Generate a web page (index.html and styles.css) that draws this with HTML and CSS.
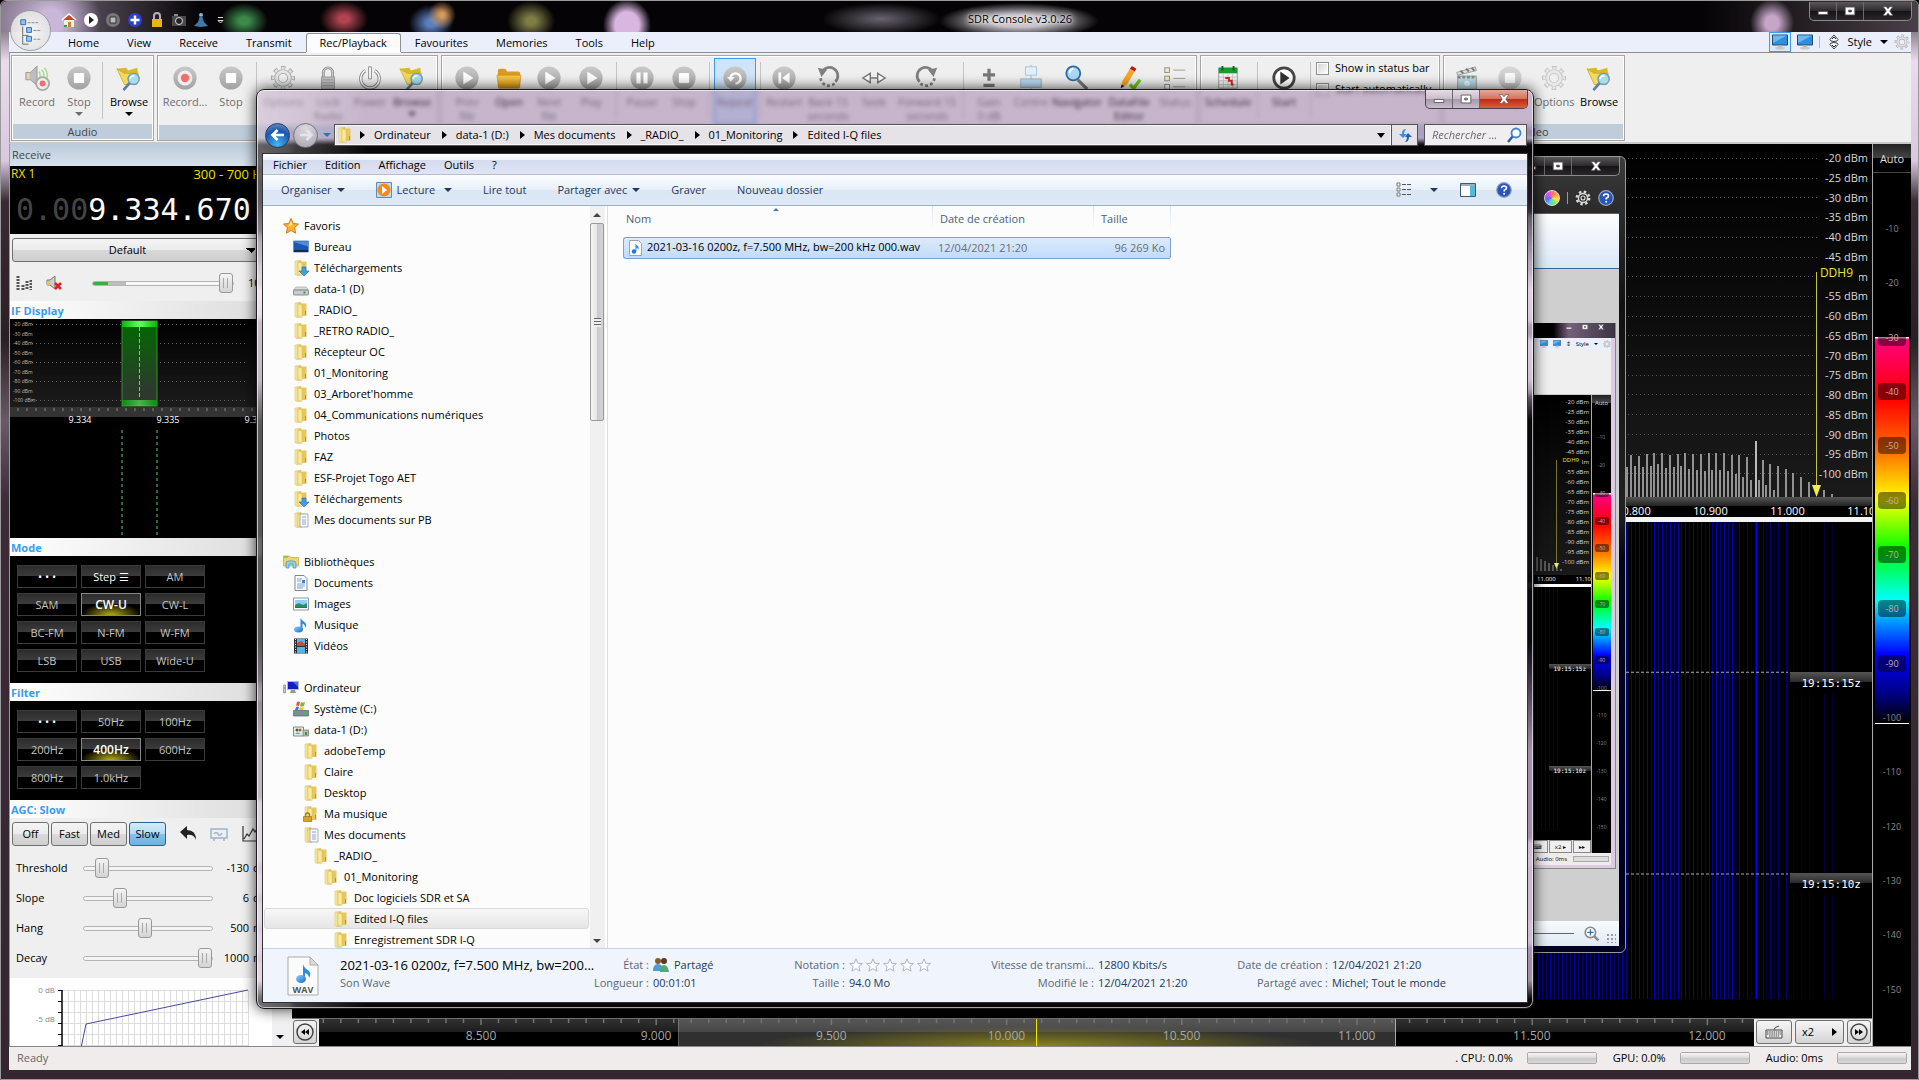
FILE: index.html
```
<!DOCTYPE html>
<html lang="fr">
<head>
  <meta charset="UTF-8" />
  <meta name="viewport" content="width=device-width, initial-scale=1.0"/>
  <title>SDR Console v3.0.26</title>
  <link rel="stylesheet" href="styles.css">
</head>
<body>

  <!-- icon sprite -->
  <svg class="sprite" aria-hidden="true">
    <defs>
      <linearGradient id="gDisc" x1="0" y1="0" x2="0" y2="1"><stop offset="0" stop-color="#c9c9c9"/><stop offset="1" stop-color="#a2a2a2"/></linearGradient>
      <linearGradient id="gFold" x1="0" y1="0" x2="1" y2="0"><stop offset="0" stop-color="#fbf0a8"/><stop offset="1" stop-color="#dcb84e"/></linearGradient>
      <linearGradient id="gOrange" x1="0" y1="0" x2="0" y2="1"><stop offset="0" stop-color="#f6cd4f"/><stop offset="1" stop-color="#d9920c"/></linearGradient>
      <linearGradient id="gBlue" x1="0" y1="0" x2="1" y2="1"><stop offset="0" stop-color="#8fd0fb"/><stop offset="1" stop-color="#1668c8"/></linearGradient>
    </defs>
    <symbol id="play" viewBox="0 0 28 28"><circle cx="14" cy="14" r="12.5" fill="url(#gDisc)"/><path d="M10 7l11 7-11 7z" fill="#fff"/></symbol>
    <symbol id="stop" viewBox="0 0 28 28"><circle cx="14" cy="14" r="12.5" fill="url(#gDisc)"/><rect x="8.500" y="8.500" width="11" height="11" rx="1" fill="#fff"/></symbol>
    <symbol id="pause" viewBox="0 0 28 28"><circle cx="14" cy="14" r="12.5" fill="url(#gDisc)"/><path d="M8 8h4.500v12H8zM15.500 8H20v12h-4.500z" fill="#fff"/></symbol>
    <symbol id="restart" viewBox="0 0 28 28"><circle cx="14" cy="14" r="12.5" fill="url(#gDisc)"/><path d="M8 8h3v12H8zM20 8v12l-8-6z" fill="#fff"/></symbol>
    <symbol id="repeat" viewBox="0 0 28 28"><circle cx="14" cy="14" r="12.5" fill="url(#gDisc)"/><path d="M9 15a5.500 5.500 0 1 1 5.500 5" fill="none" stroke="#fff" stroke-width="2.600"/><path d="M5.500 13h8l-4 5z" fill="#fff"/></symbol>
    <symbol id="rec" viewBox="0 0 28 28"><circle cx="14" cy="14" r="12.5" fill="url(#gDisc)"/><circle cx="14" cy="14" r="8" fill="#eee"/><circle cx="14" cy="14" r="4.500" fill="#f36d6d"/></symbol>
    <symbol id="speaker-rec" viewBox="0 0 28 28"><path d="M2 8h5l7-7v21l-7-6H2z" fill="#bdbdbd" stroke="#999"/><path d="M3 9h3v6H3z" fill="#e8d9a0"/><path d="M16 7q3 4 0 9M19 5q5 6 0 12M22 3q6 8 1 14" fill="none" stroke="#9fe08c" stroke-width="1.500"/><circle cx="20" cy="20" r="7" fill="#ededed" stroke="#aaa" stroke-width="2"/><circle cx="20" cy="20" r="3.200" fill="#f36d6d"/></symbol>
    <symbol id="browse" viewBox="0 0 28 28"><path d="M1 4l10-1 2 3 10-3 1 9-1 9H9z" fill="#d9b92c"/><path d="M1 4l8 5h15l-2 12H9z" fill="#f1da5e" stroke="#c09b18" stroke-width=".6"/><path d="M15 19l-7 8" stroke="#5d7ea8" stroke-width="3"/><circle cx="19" cy="15" r="6" fill="#a9dcec" stroke="#6f9db2" stroke-width="1.500"/><path d="M15 15q1-4 5-3" fill="none" stroke="#fff" stroke-width="1.500"/></symbol>
    <symbol id="gear" viewBox="0 0 28 28"><circle cx="14" cy="14" r="11" fill="none" stroke="#aaa" stroke-width="4" stroke-dasharray="4.600 4.040" stroke-dashoffset="2.300"/><circle cx="14" cy="14" r="7" fill="none" stroke="#aaa" stroke-width="5"/><circle cx="14" cy="14" r="7" fill="none" stroke="#e4e4e4" stroke-width="3"/><circle cx="14" cy="14" r="10.500" fill="none" stroke="#e4e4e4" stroke-width="2.500" stroke-dasharray="3 5.250" stroke-dashoffset="1.500"/></symbol>
    <symbol id="lock" viewBox="0 0 28 28"><path d="M9 14V8a5 5 0 0 1 10 0v6" fill="none" stroke="#8f8f8f" stroke-width="3"/><path d="M9 14V8a5 5 0 0 1 10 0v6" fill="none" stroke="#ddd" stroke-width="1"/><rect x="7" y="13" width="14" height="13" fill="#c4c4c4" stroke="#9a9a9a"/><path d="M8 16h12M8 19h12M8 22h12" stroke="#999"/></symbol>
    <symbol id="power" viewBox="0 0 28 28"><path d="M9 6a10 10 0 1 0 10 0" fill="none" stroke="#888" stroke-width="3.500"/><path d="M9 6a10 10 0 1 0 10 0M14 3v12" fill="none" stroke="#fff" stroke-width="1.500"/><path d="M12.500 2h3v13h-3z" fill="#fff" stroke="#888"/></symbol>
    <symbol id="open" viewBox="0 0 28 28"><path d="M2 6q0-2 2-2h6l2 3h12q2 0 2 2v15H2z" fill="#d99c22"/><path d="M3 25L1 11h26l-2 14z" fill="url(#gOrange)" stroke="#c8860e" stroke-width=".6"/></symbol>
    <symbol id="ccw" viewBox="0 0 28 28"><path d="M7 9a9 9 0 1 1 15 9" fill="none" stroke="#808080" stroke-width="3"/><path d="M21 20a9 9 0 0 1-15-6" fill="none" stroke="#808080" stroke-width="3" stroke-dasharray="3 2.500"/><path d="M3 3l10 2-6 8z" fill="#808080"/></symbol>
    <symbol id="cw" viewBox="0 0 28 28"><path d="M21 9a9 9 0 1 0-15 9" fill="none" stroke="#808080" stroke-width="3"/><path d="M7 20a9 9 0 0 0 15-6" fill="none" stroke="#808080" stroke-width="3" stroke-dasharray="3 2.500"/><path d="M25 3L15 5l6 8z" fill="#808080"/></symbol>
    <symbol id="seek" viewBox="0 0 28 28"><path d="M2 14l8-5v10zM26 14l-8-5v10zM10 14h8" fill="#fff" stroke="#777" stroke-width="1.500"/></symbol>
    <symbol id="gain" viewBox="0 0 28 28"><path d="M14 4v13M7.500 10.500h13M8 22h12" stroke="#777" stroke-width="3.500"/></symbol>
    <symbol id="centre" viewBox="0 0 28 28"><path d="M14 0v28" stroke="#9bb4c8"/><rect x="8" y="2" width="12" height="9" fill="#e3f0f9" stroke="#a6c3da"/><rect x="3" y="15" width="22" height="9" fill="#bcdcf2" stroke="#8fb4d2"/></symbol>
    <symbol id="lens" viewBox="0 0 28 28"><path d="M15 16l10 10" stroke="#777" stroke-width="3.500"/><circle cx="10" cy="9" r="7.500" fill="#a9d9f7" stroke="#3568a0" stroke-width="2"/><path d="M6 9q0-4 4-5" fill="none" stroke="#fff" stroke-width="2"/></symbol>
    <symbol id="pencil" viewBox="0 0 28 28"><path d="M5 25l2-8 8-13 5 3-8 14z" fill="#f5a623"/><path d="M15 4l2-3 5 3-2 3z" fill="#c5161c"/><path d="M5 25l1-4 3 2z" fill="#222"/><path d="M15 21l4 4 7-9" fill="none" stroke="#6cc71c" stroke-width="3.500"/></symbol>
    <symbol id="list" viewBox="0 0 28 28"><g fill="#f6eab0" stroke="#8a8a8a"><rect x="3" y="3" width="5" height="5"/><rect x="3" y="12" width="5" height="5"/><rect x="3" y="21" width="5" height="5" fill="#fff"/></g><path d="M12 5.500h13M12 14.500h13M12 23.500h13" stroke="#999"/></symbol>
    <symbol id="calendar" viewBox="0 0 28 28"><path d="M4 3h20v22H4z" fill="#f4f4f4" stroke="#999"/><path d="M4 3h20v6H4z" fill="#1d9a2f"/><path d="M8 1v5M20 1v5" stroke="#0d5f19" stroke-width="2"/><path d="M4 13h20M4 17h20M4 21h20M9 9v16M14 9v16M19 9v16" stroke="#c8c8c8"/><path d="M11 14h4v3h3v4h2" fill="none" stroke="#dd2222" stroke-width="2"/></symbol>
    <symbol id="start" viewBox="0 0 28 28"><circle cx="14" cy="14" r="11" fill="#fff" stroke="#454545" stroke-width="3"/><path d="M10 7l10 7-10 7z" fill="#333"/></symbol>
    <symbol id="clapper" viewBox="0 0 28 28"><path d="M3 8l20-6 1 4-20 5z" fill="#ddd" stroke="#999"/><path d="M7 6l3 3M13 4l3 3M19 3l3 3" stroke="#777" stroke-width="2"/><rect x="4" y="12" width="20" height="14" fill="#b8dbe6" stroke="#999"/><path d="M4 13h20" stroke="#888" stroke-width="3" stroke-dasharray="3 2"/><circle cx="14" cy="20" r="3" fill="#e8f6fb"/></symbol>

    <symbol id="folder" viewBox="0 0 16 16"><path d="M2 1l6-.5V15l-4 .5-2-1z" fill="url(#gFold)" stroke="#d6b95a" stroke-width=".5"/><path d="M7 1.500h6.500V14H7z" fill="#e6c65e"/><path d="M5 2l4 1v12.500l-4-1.500z" fill="#f8eb9f" stroke="#d6b95a" stroke-width=".5"/><path d="M12.500 9v4" stroke="#4aa8e0"/></symbol>
    <symbol id="folder-dl" viewBox="0 0 16 16"><use href="#folder"/><path d="M9 7h4v4h3l-5 5-5-5h3z" fill="#3d9fe6" stroke="#1c68b0" stroke-width=".6"/></symbol>
    <symbol id="folder-doc" viewBox="0 0 16 16"><use href="#folder"/><path d="M7 2h8v13H7z" fill="#f6f8fb" stroke="#8793a5" stroke-width=".7"/><path d="M9 5h4M9 8h4M9 10h4M9 12h4" stroke="#7b93b8" stroke-width=".8"/></symbol>
    <symbol id="folder-lock" viewBox="0 0 16 16"><use href="#folder"/><path d="M2.500 11V9a2 2 0 0 1 4 0v2" fill="none" stroke="#a17a10" stroke-width="1.300"/><path d="M.5 10.500h8V15.500h-8z" fill="#d9a520" stroke="#8f6a08" stroke-width=".6"/></symbol>
    <symbol id="star" viewBox="0 0 16 16"><path d="M8 .5l2.200 5 5.300.6-4 3.600 1.200 5.500L8 12.500l-4.700 2.700 1.200-5.500-4-3.600 5.300-.6z" fill="#fbb32d" stroke="#dd7714"/><path d="M8 3l1.300 3.500L5 9z" fill="#fff0a0"/></symbol>
    <symbol id="rate" viewBox="0 0 16 16"><path d="M8 1l2 5 5.300.3-4 3.500 1.300 5.200L8 12.200 3.400 15l1.300-5.200-4-3.500L6 6z" fill="#fff" stroke="#a3acb8"/></symbol>
    <symbol id="desktop" viewBox="0 0 16 16"><path d="M.5 2h15v11H.5z" fill="#1d56b0" stroke="#6f92c0"/><path d="M1 3l14-.5v5z" fill="#4b8de0"/><path d="M1 11h14v2H1z" fill="#1b2a4a"/></symbol>
    <symbol id="drive" viewBox="0 0 16 16"><path d="M3 6h10l2.500 3H.5z" fill="#ddd" stroke="#999" stroke-width=".6"/><rect x=".5" y="9" width="15" height="5" rx="1" fill="#c9cccf" stroke="#777" stroke-width=".8"/><path d="M11.500 10.500v2" stroke="#2ea52e" stroke-width="2"/></symbol>
    <symbol id="library" viewBox="0 0 16 16"><path d="M.5 2h6l1 1.500h8V12H.5z" fill="#f0d572" stroke="#c6a63d" stroke-width=".7"/><path d="M1 3h4" stroke="#56b52e"/><path d="M3 14V9.500Q3 7 6 7h4q3 0 3 2.500V14h-3v-4H6v4z" fill="#8dd3f5" stroke="#3c8fc4" stroke-width=".7"/></symbol>
    <symbol id="doc" viewBox="0 0 16 16"><path d="M2 .5h9l3 3v12H2z" fill="#fff" stroke="#7b8796"/><path d="M4 4h5M4 6h4M4 9h8M4 11h8M4 13h6" stroke="#7a99cf"/><path d="M9 5h3v3H9z" fill="#3a86d0"/></symbol>
    <symbol id="image" viewBox="0 0 16 16"><path d="M.5 2h15v12H.5z" fill="#fff" stroke="#8a97a5"/><path d="M2 4h12v8H2z" fill="#8fd0f8"/><path d="M2 9q4-3 6-1t6-1v5H2z" fill="#2d8a6a"/><path d="M2 11h12v1H2z" fill="#1b64c0"/></symbol>
    <symbol id="note" viewBox="0 0 16 16"><path d="M7.500 12V1q1 2.500 4 4 3 2.500.5 6 .5-3.500-2.500-4.500V12" fill="#2a8be0"/><ellipse cx="5.500" cy="12.500" rx="4.500" ry="3" fill="url(#gBlue)"/></symbol>
    <symbol id="film" viewBox="0 0 16 16"><path d="M1 .5h14v15H1z" fill="#2a3138"/><path d="M4 1h8v6H4zM4 9h8v6H4z" fill="#58b4e8"/><path d="M4 5l4-2 4 3v2H4z" fill="#c0502f"/><path d="M2.500 1v15M13.500 1v15" stroke="#fff" stroke-dasharray="1 1.500"/></symbol>
    <symbol id="computer" viewBox="0 0 16 16"><path d="M4 1h12v9H4z" fill="#b6bcc4"/><path d="M5 2h10v7H5z" fill="#1420b8"/><path d="M10 2h5v5z" fill="#3f6be8"/><path d="M8 10h4l1 3H7z" fill="#999"/><path d="M.5 5h2v8h-2z" fill="#ccc" stroke="#777" stroke-width=".6"/><path d="M1 8h1" stroke="#2b2"/></symbol>
    <symbol id="system" viewBox="0 0 16 16"><path d="M4 1q2-1 3 0L6 5q-2-1-3 0z" fill="#e5532d"/><path d="M8 1q2 1 4 0l-1 4q-2 1-4 0z" fill="#7cb82f"/><path d="M3 6q2-1 3 0L5 9H2z" fill="#3a7fd0"/><path d="M7 6q2 1 4 0l-1 3H6z" fill="#f8c21c"/><path d="M.5 9.500h15V15H.5z" fill="#7a8f9a" stroke="#56646c" stroke-width=".7"/><path d="M12.500 11v3" stroke="#3c3" stroke-width="2"/></symbol>
    <symbol id="shared" viewBox="0 0 16 16"><path d="M.5 5h10v9H.5z" fill="#e4eee8" stroke="#888"/><circle cx="4" cy="8" r="1.500" fill="#7a4a2a"/><circle cx="7" cy="8" r="1.500" fill="#9a6a3a"/><path d="M2 12q2-3 6 0z" fill="#5aa"/><path d="M10 8h5.500v6H10z" fill="#bbb" stroke="#777" stroke-width=".7"/><path d="M13 10v3" stroke="#2a2" stroke-width="2"/></symbol>
    <symbol id="wave" viewBox="0 0 16 16"><path d="M1.500.5h9l3 3v12h-12z" fill="#fff" stroke="#9aa5b2"/><path d="M7.500 11V3.500q1 2 2.500 2.500 1.500 2 0 4 0-2-1.500-2.500V11" fill="#2a8be0"/><circle cx="6" cy="11.500" r="2.200" fill="#1c7ad8"/></symbol>
    <symbol id="monitor" viewBox="0 0 16 16"><path d="M.5 1h15v10H.5z" fill="#2f8fdf" stroke="#27486a"/><path d="M1 1.500h14L1 9z" fill="#69b8f2"/><path d="M6 11h4v2H6z" fill="#aaa"/><ellipse cx="8" cy="14" rx="5" ry="1.500" fill="#c9c9c9"/></symbol>
    <symbol id="help" viewBox="0 0 16 16"><circle cx="8" cy="8" r="7.300" fill="#2a55b8" stroke="#97a6bd" stroke-width="1.200"/><path d="M5.500 6.300Q5.500 4 8 4t2.500 2Q10.500 7.300 8.200 8.300V9.500" fill="none" stroke="#fff" stroke-width="1.600"/><circle cx="8.200" cy="11.800" r="1" fill="#fff"/></symbol>
    <symbol id="min" viewBox="0 0 16 16"><path d="M2.500 8.500h11v3.500h-11z" fill="#fff" stroke="#555"/></symbol>
    <symbol id="max" viewBox="0 0 16 16"><path d="M2.500 3.500h11v9h-11zM6.500 7h3v2h-3z" fill="#fff" fill-rule="evenodd" stroke="#555"/></symbol>
    <symbol id="close" viewBox="0 0 16 16"><path d="M2.500 3h3.500l2 2.500L10 3h3.500L10 8l3.500 5H10L8 10.500 6 13H2.500L6 8z" fill="#fff" stroke="#555" stroke-width=".8"/></symbol>
  </svg>

  <div class="console">
    <header class="titlebar">
      <div class="quick">
        <svg viewBox="0 0 16 16"><path d="M1 8l7-6 7 6z" fill="#c7482a"/><path d="M1 8l7-6 7 6" fill="none" stroke="#fff" stroke-width="1.500"/><path d="M3 8h10v7H3z" fill="#f1efe2"/><path d="M7 10h3v5H7z" fill="#c98435"/><path d="M3 14h3" stroke="#2fa52f" stroke-width="2"/></svg>
        <svg viewBox="0 0 16 16"><circle cx="8" cy="8" r="7" fill="#fff"/><path d="M6 4l5 4-5 4z" fill="#222"/></svg>
        <svg viewBox="0 0 16 16"><circle cx="8" cy="8" r="7" fill="#777"/><path d="M5 5h6v6H5z" fill="#bbb" stroke="#333"/></svg>
        <svg viewBox="0 0 16 16"><circle cx="8" cy="8" r="7" fill="#2b3fd0"/><path d="M8 3.500v9M3.500 8h9" stroke="#fff" stroke-width="2.500"/></svg>
        <svg viewBox="0 0 16 16"><path d="M5 7V4q0-3 3-3t3 3v3" fill="none" stroke="#b4b4b4" stroke-width="2"/><path d="M3 7h10v8H3z" fill="#e8b617"/></svg>
        <svg viewBox="0 0 16 16"><path d="M1 4h14v10H1z" fill="#4a4a4a"/><path d="M3 2h4v2H3z" fill="#888"/><circle cx="8" cy="9" r="3.500" fill="#222" stroke="#ddd"/></svg>
        <svg viewBox="0 0 16 16"><circle cx="8" cy="3" r="2" fill="#8ab6dc"/><path d="M7 4h2l2 6 4 4-7 1-7-1 4-4z" fill="#3f78ad"/></svg>
        <svg viewBox="0 0 16 16"><path d="M3 5.500h5M3 8.500h5L5.500 11z" fill="none" stroke="#ddd"/></svg>
      </div>
      <h1>SDR Console v3.0.26</h1>
      <div class="caption dark">
        <button aria-label="Minimize"><svg><use href="#min"/></svg></button>
        <button aria-label="Restore"><svg><use href="#max"/></svg></button>
        <button class="wide" aria-label="Close"><svg><use href="#close"/></svg></button>
      </div>
    </header>

    <button class="orb" aria-label="Menu"><svg viewBox="0 0 40 40"><path d="M12 16v18M12 25h6M12 34h6" fill="none" stroke="#666"/><path d="M17 12h12M23 20h8M23 29h8" stroke="#888" stroke-dasharray="3 1"/><g fill="#8fc6f0" stroke="#2d6fa8"><path d="M10 9h5v5h-5zM16 17h5v5h-5zM16 26h5v5h-5z"/></g></svg></button>

    <nav class="tabs">
      <a href="#">Home</a><a href="#">View</a><a href="#">Receive</a><a href="#">Transmit</a><a href="#" class="active">Rec/Playback</a><a href="#">Favourites</a><a href="#">Memories</a><a href="#">Tools</a><a href="#">Help</a>
      <div class="tab-tools">
        <button class="picked" aria-label="Screen 1"><svg><use href="#monitor"/></svg></button>
        <button aria-label="Screen 2"><svg><use href="#monitor"/></svg></button>
        <i class="bar"></i>
        <svg viewBox="0 0 16 16"><path d="M8 1l4 4.500q0 2-4 2t-4-2zM8 15l4-4.500q0-2-4-2t-4 2z" fill="#f7f7f7" stroke="#444"/><path d="M6 5l2-2 2 2M6 11l2 2 2-2" fill="none" stroke="#222"/></svg>
        <button class="style-btn">Style <i class="down"></i></button>
        <svg><use href="#gear"/></svg>
      </div>
    </nav>

    <section class="ribbon">
      <div class="group">
        <div class="tools">
          <button class="w46 off"><svg><use href="#speaker-rec"/></svg>Record</button>
          <button class="w38 off"><svg><use href="#stop"/></svg>Stop<i class="down"></i></button>
          <i class="sep"></i>
          <button class="w44"><svg><use href="#browse"/></svg>Browse<i class="down"></i></button>
        </div>
        <div class="group-name">Audio</div>
      </div>
      <div class="group">
        <div class="tools">
          <button class="w50 off"><svg><use href="#rec"/></svg>Record...</button>
          <button class="w42 off"><svg><use href="#stop"/></svg>Stop</button>
          <i class="sep"></i>
          <button class="w44 off"><svg><use href="#gear"/></svg>Options</button>
          <button class="w46 off"><svg><use href="#lock"/></svg>Lock<br>Radio</button>
          <button class="w38 off"><svg><use href="#power"/></svg>Power</button>
          <button class="w46"><svg><use href="#browse"/></svg>Browse<i class="down"></i></button>
        </div>
        <div class="group-name">Data</div>
      </div>
      <div class="group">
        <div class="tools">
          <button class="w46 off"><svg><use href="#play"/></svg>Prev<br>file</button>
          <button class="w38"><svg><use href="#open"/></svg>Open</button>
          <button class="w42 off"><svg><use href="#play"/></svg>Next<br>file</button>
          <button class="w42 off"><svg><use href="#play"/></svg>Play</button>
          <i class="sep"></i>
          <button class="w42 off"><svg><use href="#pause"/></svg>Pause</button>
          <button class="w42 off"><svg><use href="#stop"/></svg>Stop</button>
          <i class="sep"></i>
          <button class="w42 off on"><svg><use href="#repeat"/></svg>Repeat</button>
          <i class="sep"></i>
          <button class="w38 off"><svg><use href="#restart"/></svg>Restart</button>
          <button class="w50 off"><svg><use href="#ccw"/></svg>Back 15<br>seconds</button>
          <button class="w42 off"><svg><use href="#seek"/></svg>Seek</button>
          <button class="w64 off"><svg><use href="#cw"/></svg>Forward 15<br>seconds</button>
          <i class="sep"></i>
          <button class="w42 off"><svg><use href="#gain"/></svg>Gain<br>0 dB</button>
          <button class="w42 off"><svg><use href="#centre"/></svg>Centre</button>
          <button class="w50"><svg><use href="#lens"/></svg>Navigator</button>
          <button class="w54"><svg><use href="#pencil"/></svg>DataFile<br>Editor</button>
          <button class="w38 off"><svg><use href="#list"/></svg>Status</button>
        </div>
        <div class="group-name">Playback</div>
      </div>
      <div class="group">
        <div class="tools">
          <button class="w50"><svg><use href="#calendar"/></svg>Schedule</button>
          <i class="sep"></i>
          <button class="w44"><svg><use href="#start"/></svg>Start</button>
          <i class="sep"></i>
          <div class="checks">
            <label><input type="checkbox"> Show in status bar</label>
            <label><input type="checkbox"> Start automatically</label>
          </div>
        </div>
        <div class="group-name">Scheduler</div>
      </div>
      <div class="group">
        <div class="tools">
          <button class="w42 off"><svg><use href="#clapper"/></svg>Record</button>
          <button class="w44 off"><svg class="faint"><use href="#stop"/></svg>Stop</button>
          <button class="w44 off"><svg class="faint"><use href="#gear"/></svg>Options</button>
          <button class="w46"><svg><use href="#browse"/></svg>Browse</button>
        </div>
        <div class="group-name">Video</div>
      </div>
    </section>

    <main class="workspace">
      <aside class="receive">
        <h2>Receive</h2>
        <div class="rx">
          <div class="rx-head"><span>RX 1</span><span>300 - 700 Hz</span></div>
          <div class="freq"><span>0.00</span>9.334.670</div>
        </div>
        <div class="rx-tools">
          <select aria-label="Device"><option>Default</option></select>
          <div class="volume">
            <svg viewBox="0 0 16 16"><path d="M2 1v14M7 10v5M11 6v9M15 5v10" stroke="#555" stroke-width="3" stroke-dasharray="2 1"/></svg>
            <svg viewBox="0 0 16 16"><path d="M1 5h3l5-4v13l-5-4H1z" fill="#ccc" stroke="#777"/><path d="M1 6h3v4H1z" fill="#e9c62a"/><path d="M9 8l6 6M15 8l-6 6" stroke="#d22" stroke-width="2.500"/></svg>
            <input type="range" class="vol" value="100" aria-label="Volume">
            <span>100%</span>
          </div>
        </div>
        <h3>IF Display</h3>
        <svg class="if-display" id="ifDisplay" viewBox="0 0 262 219"></svg>
        <h3>Mode</h3>
        <div class="keys">
          <button class="lit">• • •</button><button class="lit">Step ☰</button><button>AM</button>
          <button>SAM</button><button class="active">CW-U</button><button>CW-L</button>
          <button>BC-FM</button><button>N-FM</button><button>W-FM</button>
          <button>LSB</button><button>USB</button><button>Wide-U</button>
        </div>
        <h3>Filter</h3>
        <div class="keys">
          <button class="lit">• • •</button><button>50Hz</button><button>100Hz</button>
          <button>200Hz</button><button class="active">400Hz</button><button>600Hz</button>
          <button>800Hz</button><button>1.0kHz</button>
        </div>
        <h3>AGC: Slow</h3>
        <div class="agc">
          <div class="agc-modes">
            <button>Off</button><button>Fast</button><button>Med</button><button class="active">Slow</button>
            <svg viewBox="0 0 18 18"><path d="M1 7l7-6v4q9 0 9 10-2-6-9-5v4z" fill="#222"/></svg>
            <svg viewBox="0 0 18 18"><path d="M1 4h16v9H1zM4 9q2-3 4 0t4-1M4 13v3M14 13v3" fill="none" stroke="#9db4cc" stroke-width="1.500"/></svg>
            <svg viewBox="0 0 18 18"><path d="M2 1v15h15M3 14l3-5 2 2 4-7 2 3 4-6" fill="none" stroke="#333" stroke-width="1.200"/></svg>
          </div>
          <div class="agc-row"><label for="thr">Threshold</label><input type="range" id="thr" value="10"><b>-130</b> dBm</div>
          <div class="agc-row"><label for="slope">Slope</label><input type="range" id="slope" value="25"><b>6</b> dB</div>
          <div class="agc-row"><label for="hang">Hang</label><input type="range" id="hang" value="47"><b>500</b> ms</div>
          <div class="agc-row"><label for="decay">Decay</label><input type="range" id="decay" value="100"><b>1000</b> ms</div>
        </div>
        <svg class="agc-chart" id="agcChart" viewBox="0 0 262 70"></svg>
      </aside>
      <div class="splitter"><i class="down"></i></div>

      <section class="spectrum">
        <div class="plot">
          <svg id="plot" viewBox="0 0 340 353"></svg>
          <div class="dbm" id="dbm"></div>
          <span class="ddh">DDH9</span>
        </div>
        <div class="ruler"><span>10.800</span><span>10.900</span><span>11.000</span><span>11.100</span></div>
        <div class="waterfall">
          <svg id="fall" viewBox="0 0 340 475" preserveAspectRatio="none"></svg>
          <time class="t1">19:15:15z</time>
          <time class="t2">19:15:10z</time>
        </div>
        <div class="band-row">
          <button class="round" aria-label="Back"><svg viewBox="0 0 20 20"><circle cx="10" cy="10" r="8" fill="none" stroke="#444" stroke-width="1.500"/><path d="M10 7v6l-4-3zM14 7v6l-4-3z"/></svg></button>
          <div class="band">
            <svg id="bandTicks"></svg>
            <span>8.500</span><span>9.000</span><span>9.500</span><span>10.000</span><span>10.500</span><span>11.000</span><span>11.500</span><span>12.000</span>
          </div>
          <button class="kbd" aria-label="Keyboard"><svg viewBox="0 0 20 20"><path d="M2 8h16v8H2z" fill="#eee" stroke="#444"/><path d="M3 10h14M3 12h14M5 14h10" stroke="#444" stroke-dasharray="1.500 .7"/><path d="M10 8q0-3 5-4" fill="none" stroke="#444"/></svg></button>
          <button class="zoom">x2 <i class="right"></i></button>
          <button class="round" aria-label="Forward"><svg viewBox="0 0 20 20"><circle cx="10" cy="10" r="8" fill="none" stroke="#444" stroke-width="1.500"/><path d="M10 7v6l4-3zM6 7v6l4-3z"/></svg></button>
        </div>
      </section>

      <aside class="levels">
        <button>Auto</button>
        <div class="level-bar" id="levels"></div>
      </aside>
    </main>

    <footer class="status">
      <span class="ready">Ready</span>
      <label for="cpu">. CPU: 0.0%</label><progress id="cpu" value="0" max="100"></progress>
      <label for="gpu">GPU: 0.0%</label><progress id="gpu" value="0" max="100"></progress>
      <label for="audio">Audio: 0ms</label><progress id="audio" value="0" max="100"></progress>
    </footer>
  </div>

  <!-- snipping viewer window behind the explorer -->
  <div class="viewer">
    <div class="caption dark">
      <button aria-label="Réduire"><svg><use href="#min"/></svg></button>
      <button aria-label="Agrandir"><svg><use href="#max"/></svg></button>
      <button class="wide" aria-label="Fermer"><svg><use href="#close"/></svg></button>
    </div>
    <div class="viewer-tools">
      <i class="wheel"></i><i class="bar"></i>
      <svg viewBox="0 0 28 28"><circle cx="14" cy="14" r="11" fill="none" stroke="#ddd" stroke-width="4" stroke-dasharray="4.300 4.340"/><circle cx="14" cy="14" r="8" fill="none" stroke="#ddd" stroke-width="2.500"/><circle cx="14" cy="14" r="3.500" fill="none" stroke="#ddd" stroke-width="2"/></svg>
      <svg><use href="#help"/></svg>
    </div>
    <div class="viewer-ribbon"></div>
    <div class="viewer-body">
      <div class="mini">
        <div class="mini-title"><svg><use href="#min"/></svg><svg><use href="#max"/></svg><svg><use href="#close"/></svg></div>
        <div class="mini-tabs"><svg><use href="#monitor"/></svg><svg><use href="#monitor"/></svg><span>⇕</span><span>Style</span><i class="down"></i><svg><use href="#gear"/></svg></div>
        <div class="mini-ribbon"></div>
        <div class="mini-main">
          <div class="mini-spec">
            <div class="mini-plot"><svg id="miniPlot" viewBox="0 0 70 180"></svg><div class="dbm" id="miniDbm"></div><span class="ddh">DDH9</span></div>
            <div class="mini-ruler"><span>11.000</span><span>11.10</span></div>
            <div class="mini-fall"><time class="t1">19:15:15z</time><time class="t2">19:15:10z</time></div>
            <div class="mini-buttons"><span>⌨</span><span>x2 ▸</span><span>▸▸</span></div>
          </div>
          <div class="mini-levels"><span class="auto">Auto</span><div class="level-bar" id="miniLevels"></div></div>
        </div>
        <div class="mini-status">Audio: 0ms <i></i></div>
      </div>
    </div>
    <div class="viewer-foot"><i class="line"></i>
      <svg viewBox="0 0 20 20"><path d="M12 12l6 6" stroke="#888" stroke-width="3"/><circle cx="8" cy="8" r="6.500" fill="#fff" stroke="#888" stroke-width="2"/><path d="M8 4v8M4 8h8" stroke="#2d6fb8" stroke-width="1.500"/></svg>
      <i class="grip"></i>
    </div>
  </div>

  <div class="explorer">
    <div class="caption">
      <button aria-label="Réduire"><svg><use href="#min"/></svg></button>
      <button aria-label="Agrandir"><svg><use href="#max"/></svg></button>
      <button class="wide red" aria-label="Fermer"><svg><use href="#close"/></svg></button>
    </div>
    <div class="address">
      <button class="nav back" aria-label="Précédent"><svg viewBox="0 0 16 16"><path d="M7.500 3L2.500 8l5 5M3 8h11" fill="none" stroke="#fff" stroke-width="2.600"/></svg></button>
      <button class="nav" aria-label="Suivant"><svg viewBox="0 0 16 16"><path d="M8.500 3l5 5-5 5M13 8H2" fill="none" stroke="#e4e4ea" stroke-width="2.600"/></svg></button>
      <i class="down blue"></i>
      <div class="path">
        <svg><use href="#folder"/></svg>
        <i class="right"></i><a href="#">Ordinateur</a>
        <i class="right"></i><a href="#">data-1 (D:)</a>
        <i class="right"></i><a href="#">Mes documents</a>
        <i class="right"></i><a href="#">_RADIO_</a>
        <i class="right"></i><a href="#">01_Monitoring</a>
        <i class="right"></i><a href="#">Edited I-Q files</a>
        <i class="down end"></i>
      </div>
      <button class="refresh" aria-label="Actualiser"><svg viewBox="0 0 16 16"><path d="M9 2q-4 0-4 5H2l4 4 4-4H7q0-3 2-5z" fill="#3590dd"/><path d="M8 15q4 0 4-5h3l-4-4-3 4h2q0 3-2 5z" fill="#1c62b8"/></svg></button>
      <div class="search"><input type="text" placeholder="Rechercher ..." aria-label="Rechercher"><svg viewBox="0 0 16 16"><path d="M7 9l-5 6" stroke="#2a5fa8" stroke-width="2.500"/><circle cx="10" cy="6" r="4.500" fill="#fff" stroke="#3c86cc" stroke-width="1.800"/></svg></div>
    </div>

    <div class="client">
      <nav class="menubar"><a href="#">Fichier</a><a href="#">Edition</a><a href="#">Affichage</a><a href="#">Outils</a><a href="#">?</a></nav>
      <div class="toolbar">
        <button>Organiser <i class="down"></i></button>
        <button class="lecture"><svg viewBox="0 0 16 16"><path d="M.5.5h15v15H.5z" fill="#b8dcf5" stroke="#5f8db8"/><circle cx="8" cy="8" r="6.500" fill="#f28a1c"/><path d="M6 4l5 4-5 4z" fill="#fff"/></svg>Lecture <i class="down gap"></i></button>
        <button>Lire tout</button>
        <button>Partager avec <i class="down"></i></button>
        <button>Graver</button>
        <button>Nouveau dossier</button>
        <div class="toolbar-end">
          <svg viewBox="0 0 16 16"><path d="M1 1h3v3H1zM1 6h3v3H1zM1 11h3v3H1z" fill="#fff" stroke="#777"/><path d="M6 2.500h9M6 7.500h9M6 12.500h9" stroke="#555" stroke-dasharray="4 1"/></svg>
          <i class="down"></i>
          <svg viewBox="0 0 16 16"><path d="M.5 1.500h15v13H.5z" fill="#fff" stroke="#3c5a78"/><path d="M.5 3h15" stroke="#3c5a78"/><path d="M10 4h5v10h-5z" fill="#58b8dc"/></svg>
          <svg><use href="#help"/></svg>
        </div>
      </div>

      <div class="panes">
        <div class="tree">
          <ul>
            <li class="l0"><svg><use href="#star"/></svg>Favoris</li>
            <li><svg><use href="#desktop"/></svg>Bureau</li>
            <li><svg><use href="#folder-dl"/></svg>Téléchargements</li>
            <li><svg><use href="#drive"/></svg>data-1 (D)</li>
            <li><svg><use href="#folder"/></svg>_RADIO_</li>
            <li><svg><use href="#folder"/></svg>_RETRO RADIO_</li>
            <li><svg><use href="#folder"/></svg>Récepteur OC</li>
            <li><svg><use href="#folder"/></svg>01_Monitoring</li>
            <li><svg><use href="#folder"/></svg>03_Arboret'homme</li>
            <li><svg><use href="#folder"/></svg>04_Communications numériques</li>
            <li><svg><use href="#folder"/></svg>Photos</li>
            <li><svg><use href="#folder"/></svg>FAZ</li>
            <li><svg><use href="#folder"/></svg>ESF-Projet Togo AET</li>
            <li><svg><use href="#folder-dl"/></svg>Téléchargements</li>
            <li><svg><use href="#folder-doc"/></svg>Mes documents sur PB</li>
          </ul>
          <ul>
            <li class="l0"><svg><use href="#library"/></svg>Bibliothèques</li>
            <li><svg><use href="#doc"/></svg>Documents</li>
            <li><svg><use href="#image"/></svg>Images</li>
            <li><svg><use href="#note"/></svg>Musique</li>
            <li><svg><use href="#film"/></svg>Vidéos</li>
          </ul>
          <ul>
            <li class="l0"><svg><use href="#computer"/></svg>Ordinateur</li>
            <li><svg><use href="#system"/></svg>Système (C:)</li>
            <li><svg><use href="#shared"/></svg>data-1 (D:)</li>
            <li class="l2"><svg><use href="#folder"/></svg>adobeTemp</li>
            <li class="l2"><svg><use href="#folder"/></svg>Claire</li>
            <li class="l2"><svg><use href="#folder"/></svg>Desktop</li>
            <li class="l2"><svg><use href="#folder-lock"/></svg>Ma musique</li>
            <li class="l2"><svg><use href="#folder-doc"/></svg>Mes documents</li>
            <li class="l3"><svg><use href="#folder"/></svg>_RADIO_</li>
            <li class="l4"><svg><use href="#folder"/></svg>01_Monitoring</li>
            <li class="l5"><svg><use href="#folder"/></svg>Doc logiciels SDR et SA</li>
            <li class="l5 selected"><svg><use href="#folder"/></svg>Edited I-Q files</li>
            <li class="l5"><svg><use href="#folder"/></svg>Enregistrement SDR I-Q</li>
          </ul>
        </div>
        <div class="scroll"><i class="up"></i><div class="thumb"><i></i></div><i class="down"></i></div>

        <div class="files">
          <table>
            <thead><tr><th class="name"><i class="sort"></i>Nom</th><th class="date">Date de création</th><th class="size">Taille</th></tr></thead>
            <tbody><tr><td><svg><use href="#wave"/></svg>2021-03-16 0200z, f=7.500 MHz, bw=200 kHz 000.wav</td><td>12/04/2021 21:20</td><td>96 269 Ko</td></tr></tbody>
          </table>
        </div>
      </div>

      <div class="details">
        <svg class="wav-icon" viewBox="0 0 32 40"><path d="M1 1h22l8 8v30H1z" fill="#fbfbfb" stroke="#aaa"/><path d="M23 1v8h8z" fill="#ddd" stroke="#aaa"/><path d="M16 22V8q1 4 5 6 4 3 1 8 0-4-4-5v5" fill="#2a8be0"/><ellipse cx="14" cy="23" rx="5" ry="4" fill="url(#gBlue)"/><text x="16" y="37">WAV</text></svg>
        <div class="facts">
          <b>2021-03-16 0200z, f=7.500 MHz, bw=200...</b><span>État :</span><em><svg viewBox="0 0 16 16"><circle cx="5" cy="4" r="3" fill="#8a5a2e"/><circle cx="11" cy="4" r="3" fill="#5a3a1e"/><path d="M0 14q0-7 5-7t5 7z" fill="#4a9ed0"/><path d="M7 15q0-7 4-7t5 7z" fill="#57a86a"/></svg>Partagé</em><span>Notation :</span><em class="stars"><svg><use href="#rate"/></svg><svg><use href="#rate"/></svg><svg><use href="#rate"/></svg><svg><use href="#rate"/></svg><svg><use href="#rate"/></svg></em><span>Vitesse de transmi...</span><em>12800 Kbits/s</em><span>Date de création :</span><em>12/04/2021 21:20</em>
          <span class="kind">Son Wave</span><span>Longueur :</span><em>00:01:01</em><span>Taille :</span><em>94.0 Mo</em><span>Modifié le :</span><em>12/04/2021 21:20</em><span>Partagé avec :</span><em>Michel; Tout le monde</em>
        </div>
      </div>
    </div>
  </div>

  <script src="script.js"></script>
</body>
</html>
```
FILE: styles.css
```
:root {
  --ui: "Open Sans", "Noto Sans", sans-serif;
  --mono: "DejaVu Sans Mono", monospace;
  --face: #efefef;
  --line: #a5a5a5;
  --blue: #3a9bf5;
}

* {
  box-sizing: border-box;
}

body {
  margin: 0;
  height: 100vh;
  overflow: hidden;
  font-family: var(--ui);
  font-size: 11px;
  line-height: 14px;
  color: #000;
  background: #050305;
}

button {
  font: inherit;
  color: inherit;
  background: none;
  border: 0;
  padding: 0;
  margin: 0;
}

a {
  color: inherit;
  text-decoration: none;
}

h1, h2, h3, ul {
  margin: 0;
  padding: 0;
  font-size: inherit;
  font-weight: normal;
  list-style: none;
}

svg {
  width: 16px;
  height: 16px;
  flex: none;
}

.sprite {
  position: absolute;
  width: 0;
  height: 0;
}

/* small arrows */
.down, .right, .up {
  display: inline-block;
  flex: none;
  border: 4px solid transparent;
}

.down {
  border-top-color: currentColor;
  border-bottom: 0;
}

.up {
  border-bottom-color: currentColor;
  border-top: 0;
}

.right {
  border-left: 5px solid currentColor;
  border-right: 0;
}

.bar {
  width: 1px;
  height: 12px;
  background: #bbb;
}

/* window buttons */
.caption {
  display: flex;
  align-self: flex-end;
  height: 19px;
  flex: none;
  border: 1px solid #4a424c;
  border-top: 0;
  border-radius: 0 0 5px 5px;
  overflow: hidden;
  background: linear-gradient(#e6dce8, #c8bccb 50%, #a598aa 50%, #c9bccd);
}

.caption button {
  width: 27px;
  display: flex;
  align-items: center;
  justify-content: center;
  border-right: 1px solid #6d6570;
}

.caption .wide {
  width: 47px;
  border-right: 0;
}

.caption svg {
  width: 14px;
  height: 14px;
}

.caption .red {
  background: linear-gradient(#e9a898, #d3705b 50%, #bb2a12 50%, #d8603c);
}

.caption.dark {
  border-color: #8a8a8a;
  background: linear-gradient(#5a565a, #2c292c 50%, #151315 50%, #2a272a);
}

/* main window */
.console {
  height: 100vh;
  display: flex;
  flex-direction: column;
  padding: 0 7px 9px 8px;
  background: linear-gradient(to bottom, #2b2228 0, #e9dcf0 60px, #d9c8de 160px, #3a2a33 200px, #2b1f26 340px, #6b5a66 420px, #3d2c36 500px, #35252e 100%);
  border: 1px solid #9a9a9a;
  border-radius: 6px 6px 0 0;
}

.titlebar {
  height: 31px;
  flex: none;
  margin: 0 -7px 0 -8px;
  display: flex;
  align-items: center;
  background:
    radial-gradient(circle at 50px 20px, #c9b6d8 12px, #c9b6d800 50px),
    radial-gradient(24px 18px at 243px 20px, #3c8a4c 20%, #3c8a4c00),
    radial-gradient(24px 18px at 343px 18px, #b04450 20%, #b0445000),
    radial-gradient(circle at 441px 14px, #d99a5c 2px, #d99a5c00 14px),
    radial-gradient(22px 18px at 430px 22px, #5c7fc0 20%, #5c7fc000),
    radial-gradient(24px 20px at 530px 20px, #7d7d45 20%, #7d7d4500),
    radial-gradient(24px 26px at 626px 24px, #d8b6e0 50%, #d8b6e000),
    radial-gradient(60px 16px at 880px 18px, #6a6370, #6a637000),
    radial-gradient(80px 18px at 1018px 20px, #c4bfc7 35%, #aaa5ad00),
    radial-gradient(22px 24px at 1771px 22px, #c6a6c8 30%, #c6a6c800),
    linear-gradient(90deg, #8d7d94 0, #050305 200px, #050305 1700px, #4a3f48 100%);
  border-radius: 6px 6px 0 0;
}

.quick {
  display: flex;
  gap: 6px;
  margin: 6px 0 0 60px;
}

.titlebar h1 {
  margin: 4px auto 0;
  text-shadow: 0 0 3px #fff, 0 0 6px #fff, 0 0 9px #fff;
}

.titlebar .caption {
  align-self: flex-start;
  margin: 1px 6px 0 0;
}

.orb {
  position: absolute;
  left: 10px;
  top: 10px;
  width: 41px;
  height: 41px;
  border-radius: 50%;
  border: 1px solid #999;
  background: radial-gradient(#f8f8f8, #dcdcdc);
  opacity: .92;
}

.orb svg {
  width: 39px;
  height: 39px;
}

.tabs {
  height: 21px;
  flex: none;
  display: flex;
  align-items: flex-end;
  padding-left: 45px;
  background: #ebeffc;
  border-bottom: 1px solid #8f8f8f;
}

.tabs a {
  height: 19px;
  padding: 2px 13px;
  border: 1px solid transparent;
  border-bottom: 0;
}

.tabs .active {
  background: #fcfcfc;
  border-color: #8f8f8f;
  border-radius: 3px 3px 0 0;
  box-shadow: 0 1px #fcfcfc;
}

.tab-tools {
  margin-left: auto;
  height: 20px;
  display: flex;
  align-items: center;
  gap: 6px;
  padding-right: 1px;
}

.tab-tools button {
  height: 20px;
  display: flex;
  align-items: center;
  gap: 8px;
}

.tab-tools .picked {
  border: 1px solid var(--blue);
  background: #d9ebfb;
  padding: 0 2px;
}

/* ribbon */
.ribbon {
  height: 91px;
  flex: none;
  display: flex;
  gap: 3px;
  padding: 2px 1px 1px;
  background: var(--face);
  border-bottom: 2px solid #c9c9c9;
  border-left: 1px solid #999;
}

.group {
  display: flex;
  flex-direction: column;
  border: 1px solid var(--line);
  box-shadow: inset 1px 1px #fff, inset -1px -1px #fff;
}

.tools {
  flex: 1;
  display: flex;
  padding: 2px 2px 0;
}

.tools button {
  display: flex;
  flex-direction: column;
  align-items: center;
  padding-top: 6px;
  white-space: nowrap;
  border: 1px solid transparent;
}

.tools button svg {
  width: 26px;
  height: 26px;
  margin-bottom: 4px;
}

.tools .down {
  margin-top: 3px;
}

.tools .off {
  color: #6d6d6d;
}

.tools .on {
  background: #cfe4f8;
  border-color: var(--blue);
}

.tools .faint {
  opacity: .6;
}

.w38 { width: 38px; }
.w42 { width: 42px; }
.w44 { width: 44px; }
.w46 { width: 46px; }
.w50 { width: 50px; }
.w54 { width: 54px; }
.w64 { width: 64px; }

.sep {
  width: 1px;
  margin: 4px 4px;
  background: #c4c4c4;
}

.checks {
  display: flex;
  flex-direction: column;
  gap: 7px;
  padding: 3px 6px 0 1px;
  white-space: nowrap;
}

.checks label {
  display: flex;
  align-items: center;
  gap: 6px;
}

.checks input {
  appearance: none;
  width: 13px;
  height: 13px;
  margin: 0;
  border: 1px solid #8e8f8f;
  background: linear-gradient(135deg, #d2d2d2, #fff);
  box-shadow: inset 0 0 0 1px #fff;
}

.group-name {
  height: 15px;
  line-height: 16px;
  margin: 1px;
  text-align: center;
  color: #444;
  background: #bfcddb;
}

/* workspace */
.workspace {
  flex: 1;
  min-height: 0;
  display: flex;
  background: var(--face);
  border-left: 1px solid #999;
}

.receive {
  width: 262px;
  flex: none;
  display: flex;
  flex-direction: column;
  overflow: hidden;
}

.receive h2 {
  height: 22px;
  flex: none;
  padding: 4px 2px;
  color: #444;
  background: linear-gradient(#bccbda, #d7e2ec);
}

.rx {
  height: 68px;
  flex: none;
  background: #000;
}

.rx-head {
  display: flex;
  justify-content: space-between;
  padding: 1px 4px 0 1px;
  font-size: 12px;
  white-space: nowrap;
  color: #f0e000;
}

.rx-head span + span {
  font-size: 13px;
}

.freq {
  padding: 11px 0 0 6px;
  font: 30px/36px var(--mono);
  color: #fff;
}

.freq span {
  color: #444;
}

.rx-tools {
  height: 67px;
  flex: none;
  padding: 4px 2px 0;
}

.rx-tools select {
  appearance: none;
  width: 100%;
  height: 24px;
  padding-right: 27px;
  font: inherit;
  text-align: center;
  text-align-last: center;
  border: 1px solid #707070;
  border-radius: 3px;
  background:
    linear-gradient(45deg, #0000 50%, #000 50%) 233px 9px / 5px 5px no-repeat,
    linear-gradient(-45deg, #0000 50%, #000 50%) 238px 9px / 5px 5px no-repeat,
    linear-gradient(#f4f4f4, #ebebeb 50%, #d8d8d8 50%, #cfcfcf);
}

.volume {
  display: flex;
  align-items: center;
  height: 42px;
  padding-left: 4px;
  gap: 14px;
}

.volume .vol {
  width: 142px;
  flex: none;
  margin-left: 16px;
}

input[type='range'] {
  appearance: none;
  height: 20px;
  margin: 0;
  background: none;
}

input[type='range']::-webkit-slider-runnable-track {
  height: 5px;
  border: 1px solid #b4b4b4;
  border-radius: 3px;
  background: #f4f4f4;
}

.vol::-webkit-slider-runnable-track {
  background: linear-gradient(90deg, #3caf3c 15px, #bdbdbd 15px, #bdbdbd 33px, #f8f8f8 33px) !important;
}

input[type='range']::-webkit-slider-thumb {
  appearance: none;
  width: 14px;
  height: 20px;
  margin-top: -9px;
  border: 1px solid #999;
  border-radius: 3px;
  background:
    linear-gradient(90deg, #0000 3px, #aaa 3px, #aaa 4px, #0000 4px, #0000 7px, #aaa 7px, #aaa 8px, #0000 8px) 0 4px / 12px 10px no-repeat,
    linear-gradient(#f4f4f4, #d4d4d4);
}

.receive h3 {
  height: 18px;
  flex: none;
  padding: 3px 1px;
  font-weight: bold;
  color: var(--blue);
  background: linear-gradient(90deg, #fff, #dcdcdc);
}

.if-display {
  width: 262px;
  height: 219px;
  background: #000;
}

.keys {
  flex: none;
  display: grid;
  grid-template-columns: repeat(3, 60px);
  grid-auto-rows: 23px;
  gap: 5px 4px;
  padding: 9px 7px 11px;
  background: #000;
}

.keys button {
  border: 1px solid #3a3a3a;
  color: #c4c4c4;
  background: linear-gradient(#2c2c2c, #3c3c3c 48%, #000 48%);
}

.keys .lit {
  color: #fff;
}

.keys .active {
  border-color: #888;
  color: #fff;
  font-size: 12px;
  font-weight: 600;
  background:
    radial-gradient(30px 12px at 50% 100%, #a49d10 10%, #9a941000),
    linear-gradient(#2c2c2c, #3c3c3c 48%, #000 48%);
}

.agc {
  flex: none;
  padding: 4px 2px 5px;
}

.agc-modes {
  display: flex;
  align-items: center;
  gap: 2px;
  height: 23px;
  margin-bottom: 8px;
}

.agc-modes button {
  width: 37px;
  height: 24px;
  border: 1px solid #707070;
  border-radius: 3px;
  background: linear-gradient(#f4f4f4, #ebebeb 50%, #dadada 50%, #cfcfcf);
}

.agc-modes .active {
  background: linear-gradient(#d2ecfb, #b0dbf5 50%, #86c2e8 50%, #6db3de);
  border-color: #2c628b;
}

.agc-modes svg {
  width: 18px;
  height: 18px;
  margin-left: 11px;
}

.agc-row {
  display: flex;
  align-items: center;
  height: 30px;
  padding-left: 4px;
  gap: 4px;
  white-space: nowrap;
}

.agc-row label {
  width: 63px;
  flex: none;
}

.agc-row input {
  width: 130px;
  flex: none;
}

.agc-row b {
  width: 32px;
  flex: none;
  text-align: right;
  font-weight: normal;
}

.agc-chart {
  width: 262px;
  height: 70px;
  background: #fff;
}

svg text {
  font-family: var(--ui);
}

.splitter {
  width: 20px;
  flex: none;
  display: flex;
  align-items: flex-end;
  padding: 0 0 7px 4px;
  background: #f0f0f2;
}

/* spectrum */
.spectrum {
  flex: 1;
  min-width: 0;
  display: flex;
  flex-direction: column;
  background: #000;
}

.plot {
  position: relative;
  height: 353px;
  flex: none;
  display: flex;
  justify-content: flex-end;
  background: linear-gradient(#000, #1a1a1a);
}

.plot > svg {
  width: 340px;
  height: 353px;
}

.dbm {
  position: absolute;
  right: 4px;
  top: 7px;
  height: 330px;
  display: flex;
  flex-direction: column;
  justify-content: space-between;
  text-align: right;
  color: #d8d8d8;
}

.ddh {
  position: absolute;
  right: 13px;
  top: 121px;
  padding: 1px 6px 1px 1px;
  font-size: 12px;
  color: #e8e337;
  background: #0a0a0a;
}

.ruler {
  height: 25px;
  flex: none;
  display: flex;
  justify-content: flex-end;
  padding-top: 7px;
  color: #fff;
  background: linear-gradient(#555, #222 9px, #000 9px);
  border-bottom: 5px solid #f4f4f4;
  overflow: hidden;
}

.ruler span {
  width: 77px;
  flex: none;
  text-align: center;
}

.ruler span:last-child {
  margin-right: -31px;
}

.waterfall {
  position: relative;
  flex: 1;
  min-height: 0;
  display: flex;
  justify-content: flex-end;
  padding-bottom: 19px;
}

.waterfall svg {
  width: 340px;
  height: 100%;
}

.waterfall time {
  position: absolute;
  right: 0;
  width: 82px;
  padding: 5px 11px 3px 0;
  text-align: right;
  font: 11px/14px var(--mono);
  color: #fff;
  background: linear-gradient(#555, #2a2a2a 10px, #000 10px);
}

.t1 {
  top: 150px;
}

.t2 {
  top: 351px;
}

.band-row {
  height: 28px;
  flex: none;
  display: flex;
  gap: 1px;
  border-top: 1px solid #777;
  background: var(--face);
}

.band-row button {
  height: 24px;
  margin: 1px;
  border: 1px solid #707070;
  border-radius: 3px;
  display: flex;
  align-items: center;
  justify-content: center;
  gap: 18px;
  background: linear-gradient(#f6f6f6, #d4d4d4);
}

.band-row button svg {
  width: 20px;
  height: 20px;
}

.round {
  width: 24px;
}

.kbd {
  width: 36px;
}

.zoom {
  width: 49px;
}

.band {
  position: relative;
  flex: 1;
  display: flex;
  justify-content: space-between;
  align-items: center;
  padding: 7px 17px 0 132px;
  font-size: 12px;
  color: #a8a8a8;
  background:
    linear-gradient(90deg, #0000 50%, #f0e800 50%, #f0e800 calc(50% + 1px), #0000 calc(50% + 1px)),
    radial-gradient(ellipse 280px 20px at 50% 100%, #8a841a, #8a841a00),
    linear-gradient(90deg, #0000 25%, #ddd 25%, #ffffff30 calc(25% + 1px), #ffffff30 75%, #ddd 75%, #0000 calc(75% + 1px)),
    linear-gradient(#333, #1c1c1c 13px, #000 13px);
}

.band span {
  width: 60px;
  text-align: center;
}

.band svg {
  position: absolute;
  left: 0;
  top: 0;
  width: 100%;
  height: 6px;
}

/* colour scale */
.levels {
  width: 39px;
  flex: none;
  display: flex;
  flex-direction: column;
  border-left: 1px solid #aaa;
  background: #000;
}

.levels button {
  height: 29px;
  flex: none;
  padding-top: 2px;
  color: #ddd;
  border-bottom: 1px solid #444;
  background: linear-gradient(#222, #444 50%, #000 50%);
}

.level-bar {
  flex: 1;
  display: flex;
  flex-direction: column;
  align-items: center;
  justify-content: space-between;
  padding: 47px 0 48px;
  font-size: 9px;
  line-height: 17px;
  color: #8a8a8a;
  background: linear-gradient(#fff 1px, #ff0080 2px, #f00 16%, #ff8000 31%, #ff0 42%, #0f0 55%, #0ff 68%, #00f 82%, #008 92%, #000 386px, #fff 386px) 2px 164px / 34px 387px no-repeat;
}

.level-bar span {
  width: 28px;
  text-align: center;
}

.level-bar .chip {
  border-radius: 4px;
  color: #cfa8a8;
  background: #0007;
}

/* status bar */
.status {
  height: 24px;
  flex: none;
  display: flex;
  align-items: center;
  padding: 0 4px 2px 8px;
  background: #f0eceb;
  border-top: 1px solid #888;
}

.status .ready {
  margin-right: auto;
  color: #666;
}

.status label {
  margin-left: 16px;
}

.status progress {
  appearance: none;
  width: 70px;
  height: 12px;
  margin-left: 14px;
  border: 1px solid #aaa;
  border-radius: 2px;
}

.status progress::-webkit-progress-bar {
  background: linear-gradient(#f4f4f4, #dadada 50%, #c9c9c9 50%, #d8d8d8);
}

/* viewer window */
.viewer {
  position: absolute;
  left: 1300px;
  right: 293px;
  top: 156px;
  bottom: 127px;
  display: flex;
  flex-direction: column;
  padding: 0 6px 6px;
  border: 1px solid #999;
  border-radius: 6px;
  background: linear-gradient(#3a3a3a, #111 150px, #222 350px, #05051a 400px, #000020);
}

.viewer .caption {
  margin-right: -1px;
}

.viewer-tools {
  height: 37px;
  flex: none;
  display: flex;
  align-items: center;
  justify-content: flex-end;
  gap: 7px;
  padding: 6px 5px 0 0;
}

.viewer-tools .bar {
  background: #7f9dc0;
}

.wheel {
  width: 16px;
  height: 16px;
  border-radius: 50%;
  border: 1px solid #ddd;
  background: conic-gradient(#f66, #fa4, #fd5, #7e5, #5ce, #66f, #c5f, #f6a);
}

.viewer-ribbon {
  height: 56px;
  flex: none;
  background: linear-gradient(#fdfdfe, #dbe8f6);
  border: solid #3b649c;
  border-width: 1px 0;
}

.viewer-body {
  flex: 1;
  min-height: 0;
  padding: 54px 3px 52px 0;
  background: #cfcfcf;
}

.mini {
  height: 100%;
  display: flex;
  flex-direction: column;
  padding: 0 4px 3px 0;
  font-size: 6px;
  line-height: 8px;
  background: #dccbe2;
  border: solid #888;
  border-width: 0 1px 1px 0;
}

.mini-title {
  height: 15px;
  margin-right: -4px;
  display: flex;
  justify-content: flex-end;
  gap: 8px;
  padding: 0 10px 0 0;
  background: linear-gradient(90deg, #000 80%, #76607c 85%, #3a3440);
}

.mini svg {
  width: 8px;
  height: 8px;
}

.mini-tabs {
  height: 12px;
  display: flex;
  align-items: center;
  justify-content: flex-end;
  gap: 5px;
  background: #ebeffc;
}

.mini-tabs .down {
  border-width: 2px 2px 0;
}

.mini-ribbon {
  height: 45px;
  background: var(--face);
  border-bottom: 1px solid #ccc;
}

.mini-main {
  flex: 1;
  min-height: 0;
  display: flex;
}

.mini-spec {
  flex: 1;
  display: flex;
  flex-direction: column;
  background: #000;
}

.mini-plot {
  position: relative;
  height: 180px;
  flex: none;
  display: flex;
  justify-content: flex-end;
  background: linear-gradient(#000, #1a1a1a);
}

.mini .mini-plot > svg {
  width: 70px;
  height: 180px;
}

.mini-plot .dbm {
  right: 2px;
  top: 3px;
  height: 168px;
}

.mini-plot .ddh {
  right: 9px;
  top: 60px;
  padding-right: 3px;
  font-size: 6px;
}

.mini-ruler {
  height: 12px;
  flex: none;
  display: flex;
  justify-content: flex-end;
  gap: 20px;
  color: #fff;
  border-bottom: 3px solid #fff;
}

.mini-fall {
  position: relative;
  flex: 1;
  background: repeating-linear-gradient(90deg, #000064 0 1px, #000 1px 4px) right 30px bottom 10px / 100% 100% no-repeat #000;
}

.mini-fall time {
  position: absolute;
  right: 0;
  width: 42px;
  padding: 1px 5px 0 0;
  text-align: right;
  font: 6px/8px var(--mono);
  color: #fff;
  background: linear-gradient(#555, #222 5px, #000 5px);
}

.mini-fall .t1 {
  top: 77px;
}

.mini-fall .t2 {
  top: 179px;
}

.mini-buttons {
  display: flex;
  justify-content: flex-end;
  gap: 1px;
  height: 13px;
  background: var(--face);
}

.mini-buttons span {
  padding: 2px 5px;
  border: 1px solid #888;
}

.mini-levels {
  width: 20px;
  display: flex;
  flex-direction: column;
  background: #000;
  border-left: 1px solid #aaa;
}

.mini-levels .auto {
  height: 15px;
  padding-top: 4px;
  text-align: center;
  color: #ddd;
  background: linear-gradient(#222, #444 50%, #000 50%);
}

.mini .level-bar {
  padding: 23px 0 22px;
  font-size: 5px;
  line-height: 8px;
  background-image: linear-gradient(#fff 1px, #ff0080 2px, #f00 16%, #ff8000 31%, #ff0 42%, #0f0 55%, #0ff 68%, #00f 82%, #008 92%, #000 197px, #fff 197px);
  background-position: 1px 83px;
  background-size: 18px 198px;
}

.mini .level-bar span {
  width: 14px;
}

.mini .level-bar .chip {
  border-radius: 2px;
}

.mini-status {
  height: 12px;
  display: flex;
  align-items: center;
  justify-content: flex-end;
  gap: 6px;
  padding-right: 2px;
  background: #f0eceb;
}

.mini-status i {
  width: 36px;
  height: 6px;
  border: 1px solid #aaa;
  background: #ddd;
}

.viewer-foot {
  height: 25px;
  flex: none;
  display: flex;
  align-items: center;
  justify-content: flex-end;
  gap: 6px;
  padding-right: 3px;
  background: linear-gradient(#f8fbfe, #dfe9f5);
}

.viewer-foot .line {
  flex: 1;
  height: 1px;
  margin-right: 4px;
  background: #666;
}

.viewer-foot .grip {
  width: 10px;
  height: 10px;
  align-self: flex-end;
  margin-bottom: 3px;
  background: radial-gradient(#999 1px, #0000 1px) 0 0 / 4px 4px;
}

/* explorer window */
.explorer {
  position: absolute;
  left: 256px;
  right: 385px;
  top: 89px;
  bottom: 71px;
  display: flex;
  flex-direction: column;
  padding: 0 5px 5px;
  border: 1px solid #1a1a1a;
  border-radius: 8px;
  box-shadow: 0 0 14px #000c, inset 0 0 0 1px #ffffffa0;
  background:
    linear-gradient(90deg, #fff5, #fff0 110px),
    linear-gradient(#8a609566 0, #8a609566 48px, #0b080cee 55px, #0b080cee 64px, #1a141dcc 110px, #e3d0e6cc 200px, #c8b8cccc 290px, #0b080ce0 330px, #0b080ce0 60%, #cbb4cfcc 72%, #cbb4cfcc 97%, #0b080ce0 99%);
  backdrop-filter: blur(2px);
}

.address {
  display: flex;
  align-items: center;
  height: 44px;
  flex: none;
  padding: 14px 1px 6px 2px;
}

.nav {
  width: 25px;
  height: 25px;
  flex: none;
  display: flex;
  align-items: center;
  justify-content: center;
  margin: 0 2px 0 1px;
  border-radius: 50%;
  border: 1px solid #77737c;
  background: radial-gradient(circle at 50% 20%, #dcd8e0, #a9a5b0);
}

.nav.back {
  border-color: #2a3a5a;
  background: radial-gradient(circle at 50% 90%, #41b8f0, #1a56b0 60%, #7fa0d0);
}

.address .down.blue {
  margin: 0 3px 0 3px;
  color: #1c7db0;
}

.path {
  flex: 1;
  height: 22px;
  display: flex;
  align-items: center;
  padding: 0 6px 0 2px;
  border: 1px solid #555;
  box-shadow: inset 0 0 0 1px #ffffffb0;
  background: #e6e3e8;
}

.path .right {
  margin: 0 9px 0 11px;
}

.path svg + .right {
  margin-left: 7px;
}

.path .end {
  margin-left: auto;
  border-width: 5px 4px 0;
}

.refresh {
  width: 26px;
  height: 22px;
  display: flex;
  align-items: center;
  justify-content: center;
  border: 1px solid #555;
  border-left: 0;
  background: #e6e3e8;
}

.search {
  width: 103px;
  height: 22px;
  margin-left: 6px;
  display: flex;
  align-items: center;
  padding-right: 4px;
  border: 1px solid #555;
  background: #f0eef1;
}

.search input {
  flex: 1;
  min-width: 0;
  padding: 0 0 0 7px;
  border: 0;
  background: none;
  font: italic 11px/14px var(--ui);
}

.search input::placeholder {
  color: #6a6a6a;
}

.client {
  flex: 1;
  min-height: 0;
  display: flex;
  flex-direction: column;
  background: #fcfcfc;
  border: 1px solid #333;
}

.menubar {
  height: 21px;
  flex: none;
  display: flex;
  align-items: center;
  gap: 18px;
  padding: 1px 0 0 10px;
  background: linear-gradient(#fff, #eef1fa 30%, #d4dbee 32%, #e0e5f5);
  border-bottom: 1px solid #b6bccc;
}

.toolbar {
  height: 31px;
  flex: none;
  display: flex;
  align-items: center;
  gap: 31px;
  padding-left: 18px;
  color: #1e395b;
  background: linear-gradient(#fbfdff, #e6f0fa 50%, #dce6f4 50%, #dde9f7);
  border-bottom: 1px solid #a0afc3;
}

.toolbar button {
  display: flex;
  align-items: center;
  gap: 5px;
}

.toolbar .gap {
  margin-left: 4px;
}

.toolbar-end {
  margin-left: auto;
  display: flex;
  align-items: center;
  gap: 20px;
  padding-right: 15px;
}

.toolbar-end .down {
  margin: 0 2px 0 -2px;
}

.panes {
  flex: 1;
  min-height: 0;
  display: flex;
}

.tree {
  width: 327px;
  flex: none;
  padding-top: 9px;
  overflow: hidden;
}

.tree ul {
  margin-bottom: 21px;
}

.tree li {
  height: 21px;
  display: flex;
  align-items: center;
  gap: 5px;
  margin: 0 1px;
  padding-left: 29px;
}

.tree .l0 { padding-left: 19px; }
.tree .l2 { padding-left: 39px; }
.tree .l3 { padding-left: 49px; }
.tree .l4 { padding-left: 59px; }
.tree .l5 { padding-left: 69px; }

.tree .selected {
  padding-left: 68px;
  border: 1px solid #d9d9d9;
  border-radius: 3px;
  background: linear-gradient(#f8f8f8, #e5e5e5);
}

.scroll {
  width: 18px;
  flex: none;
  display: flex;
  flex-direction: column;
  padding: 7px 3px 5px 0;
  color: #444;
  background: #f0f0f0;
  border-right: 1px solid #cfe0f2;
  box-shadow: inset -2px 0 #fff;
}

.scroll .up, .scroll .down {
  margin: 0 3px;
}

.scroll .thumb {
  height: 198px;
  margin: 6px 0 auto;
  display: flex;
  align-items: center;
  justify-content: center;
  border: 1px solid #999;
  border-radius: 2px;
  background: linear-gradient(90deg, #f5f5f5, #e4e4e4 50%, #c9c9cd 50%, #d4d4d8);
}

.thumb i {
  width: 7px;
  height: 9px;
  background: repeating-linear-gradient(#666 0 1px, #eee 1px 3px);
}

.files {
  flex: 1;
  padding-left: 15px;
}

table {
  width: 548px;
  border-spacing: 0;
  table-layout: fixed;
}

th, td {
  padding: 0 5px;
  text-align: left;
  font-weight: normal;
}

th {
  height: 31px;
  padding: 0 7px 6px;
  color: #4c607a;
  background: linear-gradient(#d5e3f2, #fcfcfc) right top / 1px 24px no-repeat;
}

.name {
  width: 310px;
  padding-left: 3px;
  position: relative;
}

.date {
  width: 161px;
}

.sort {
  position: absolute;
  left: 150px;
  top: 2px;
  border: 3px solid transparent;
  border-top: 0;
  border-bottom-color: #3c7fb1;
}

td {
  height: 22px;
  color: #6d6d6d;
  white-space: nowrap;
  border: solid #7da2ce;
  border-width: 1px 0;
  background: linear-gradient(#dcebfc, #c1dbfc);
}

td:first-child {
  color: #000;
  border-left-width: 1px;
  border-radius: 3px 0 0 3px;
  padding-left: 4px;
}

td:last-child {
  text-align: right;
  border-right-width: 1px;
  border-radius: 0 3px 3px 0;
}

td svg {
  margin-right: 3px;
  vertical-align: middle;
}

.details {
  height: 54px;
  flex: none;
  display: flex;
  padding: 7px 0 0 24px;
  gap: 21px;
  background: #f0f4fc;
  border-top: 1px solid #c5d5e8;
}

.wav-icon {
  width: 32px;
  height: 40px;
}

.wav-icon text {
  font-size: 9px;
  font-weight: bold;
  text-anchor: middle;
  fill: #555;
}

.facts {
  display: grid;
  grid-template-columns: 248px 57px 134px 54px 137px 104px 134px 92px 150px;
  grid-auto-rows: 18px;
  column-gap: 4px;
  align-items: center;
}

.facts b {
  font-size: 13px;
  font-weight: normal;
  white-space: nowrap;
}

.facts span {
  text-align: right;
  white-space: nowrap;
  color: #5a6779;
}

.facts .kind {
  text-align: left;
}

.facts em {
  display: flex;
  align-items: center;
  gap: 5px;
  font-style: normal;
  color: #1e395b;
}

.facts .stars {
  gap: 3px;
}

.stars svg {
  width: 14px;
  height: 14px;
}
```
FILE: script.js
```
const byId = (id) => document.getElementById(id);

// [x, height] of every carrier, x measured in the 340px wide plot
const peaks = [
  [95, 30], [99, 42], [103, 31], [107, 41], [111, 30], [115, 43], [119, 31], [122, 44], [126, 33], [130, 44],
  [134, 29], [138, 42], [142, 30], [146, 43], [149, 31], [153, 44], [157, 28], [161, 43], [165, 27], [169, 43],
  [173, 26], [177, 44], [180, 27], [184, 44], [188, 27], [192, 44], [196, 26], [200, 42], [204, 23], [207, 42],
  [211, 20], [215, 40], [219, 17], [224, 56], [227, 17], [231, 37], [234, 12], [238, 33], [242, 7], [246, 31],
  [254, 28], [261, 24], [269, 20], [277, 15], [292, 7], [300, 3]
];

function drawPlot() {
  let s = "";
  for (let i = 0; i < 17; i++) {
    const y = 14 + Math.round(i * 19.7);
    s += `<path d="M60 ${y}.5H287" stroke="#555" stroke-dasharray="1 3"/>`;
  }
  peaks.forEach(([x, h]) => {
    s += `<path d="M${x} 353v-${h}" stroke="#bbb" stroke-width="${h > 50 ? 2 : 1.5}"/>`;
  });
  s += `<path d="M284.5 128v215" stroke="#c8c43a"/><path d="M280 341h9l-4.500 12z" fill="#f0ec4a"/>`;
  byId("plot").innerHTML = s;
}

function drawFall() {
  let s = "";
  for (let x = 6; x < 95; x += 4) {
    s += `<path d="M${x}.5 0v475" stroke="#0000${x % 3 ? "88" : "bb"}"/>`;
  }
  peaks.forEach(([x, h]) => {
    const blue = h > 50 ? "ff" : h > 40 ? "c0" : h > 24 ? "80" : "38";
    s += `<path d="M${x}.5 0v475" stroke="#0000${blue}" stroke-width="${h > 50 ? 2 : 1}"/>`;
  });
  s += `<path d="M94 149.500H256M94 350.500H256" stroke="#aaa" stroke-dasharray="3 2"/>`;
  byId("fall").innerHTML = s;
}

function drawBand() {
  let s = "";
  for (let i = -9; i < 74; i++) {
    const x = 162 + i * 17.52;
    s += `<path d="M${x} 0v${i % 10 ? 4 : 6}" stroke="#777" stroke-width="1.5"/>`;
  }
  byId("bandTicks").innerHTML = s;
}

function drawIf() {
  let s = `<defs><linearGradient id="ifBg" x2="0" y2="1"><stop stop-color="#000"/><stop offset="1" stop-color="#1c1c1c"/></linearGradient>
    <linearGradient id="pass" x2="0" y2="1"><stop stop-color="#006a00"/><stop offset=".8" stop-color="#2c3a2c"/></linearGradient>
    <linearGradient id="cap"><stop stop-color="#0b0"/><stop offset=".5" stop-color="#6f6"/><stop offset="1" stop-color="#0b0"/></linearGradient></defs>
    <rect width="262" height="88" fill="url(#ifBg)"/>
    <rect y="88" width="262" height="10" fill="#333"/>`;
  for (let i = 0; i < 9; i++) {
    const y = 5 + Math.round(i * 9.5);
    if (i % 2 === 0) s += `<path d="M22 ${y}.5H238" stroke="#666" stroke-dasharray="1 3"/>`;
    s += `<text x="3" y="${y + 2}" font-size="5" fill="#bbb">-${20 + i * 10} dBm</text>`;
  }
  s += `<rect x="112" y="2" width="35" height="85" fill="url(#pass)" stroke="#3c8a3c"/>
    <rect x="112" y="2" width="35" height="6" fill="url(#cap)"/><rect x="112" y="81" width="35" height="6" fill="url(#cap)" opacity=".6"/>
    <path d="M129.500 8v72" stroke="#7c7" stroke-dasharray="4 2"/>
    <path d="M112 111v105M147 111v105" stroke="#2f6a2f" stroke-width="2" stroke-dasharray="3 3"/>`;
  for (let x = 8; x < 262; x += 9) s += `<path d="M${x} 89v3" stroke="#888"/>`;
  ["9.334", "9.335", "9.336"].forEach((t, i) => {
    s += `<text x="${70 + i * 88}" y="104" font-size="9" text-anchor="middle" fill="#fff">${t}</text>`;
  });
  byId("ifDisplay").innerHTML = s;
}

function drawAgc() {
  let s = "";
  for (let x = 58; x < 240; x += 6) s += `<path d="M${x}.5 12v58" stroke="#ddd"/>`;
  for (let y = 12; y < 70; y += 11) s += `<path d="M52 ${y}.5H238" stroke="#ddd"/><path d="M48 ${y}.5h4" stroke="#000"/>`;
  s += `<path d="M52 12v58" stroke="#000" stroke-width="1.500"/>
    <path d="M71 70l5-24L238 12" fill="none" stroke="#4a4a9a"/>
    <g font-size="8" fill="#888" text-anchor="end"><text x="45" y="15">0 dB</text><text x="45" y="44">-5 dB</text><text x="45" y="73">-10 dB</text></g>`;
  byId("agcChart").innerHTML = s;
}

function drawMini() {
  let s = `<path d="M35.500 65v105" stroke="#77752a"/><path d="M33 168h5l-2.500 6z" fill="#f0ec4a"/>`;
  for (let i = 0; i < 9; i++) s += `<path d="M${8 + i * 4} 176v-${18 - i * 2}" stroke="#999"/>`;
  byId("miniPlot").innerHTML = s;
}

function fillDbm(id) {
  for (let db = -20; db >= -100; db -= 5) {
    const el = document.createElement("span");
    el.textContent = db + " dBm";
    byId(id).appendChild(el);
  }
}

function fillLevels(id) {
  for (let db = -10; db >= -150; db -= 10) {
    const el = document.createElement("span");
    el.textContent = db;
    if (db <= -30 && db >= -90) el.className = "chip";
    byId(id).appendChild(el);
  }
}

drawPlot();
drawFall();
drawBand();
drawIf();
drawAgc();
drawMini();
fillDbm("dbm");
fillDbm("miniDbm");
fillLevels("levels");
fillLevels("miniLevels");
```
